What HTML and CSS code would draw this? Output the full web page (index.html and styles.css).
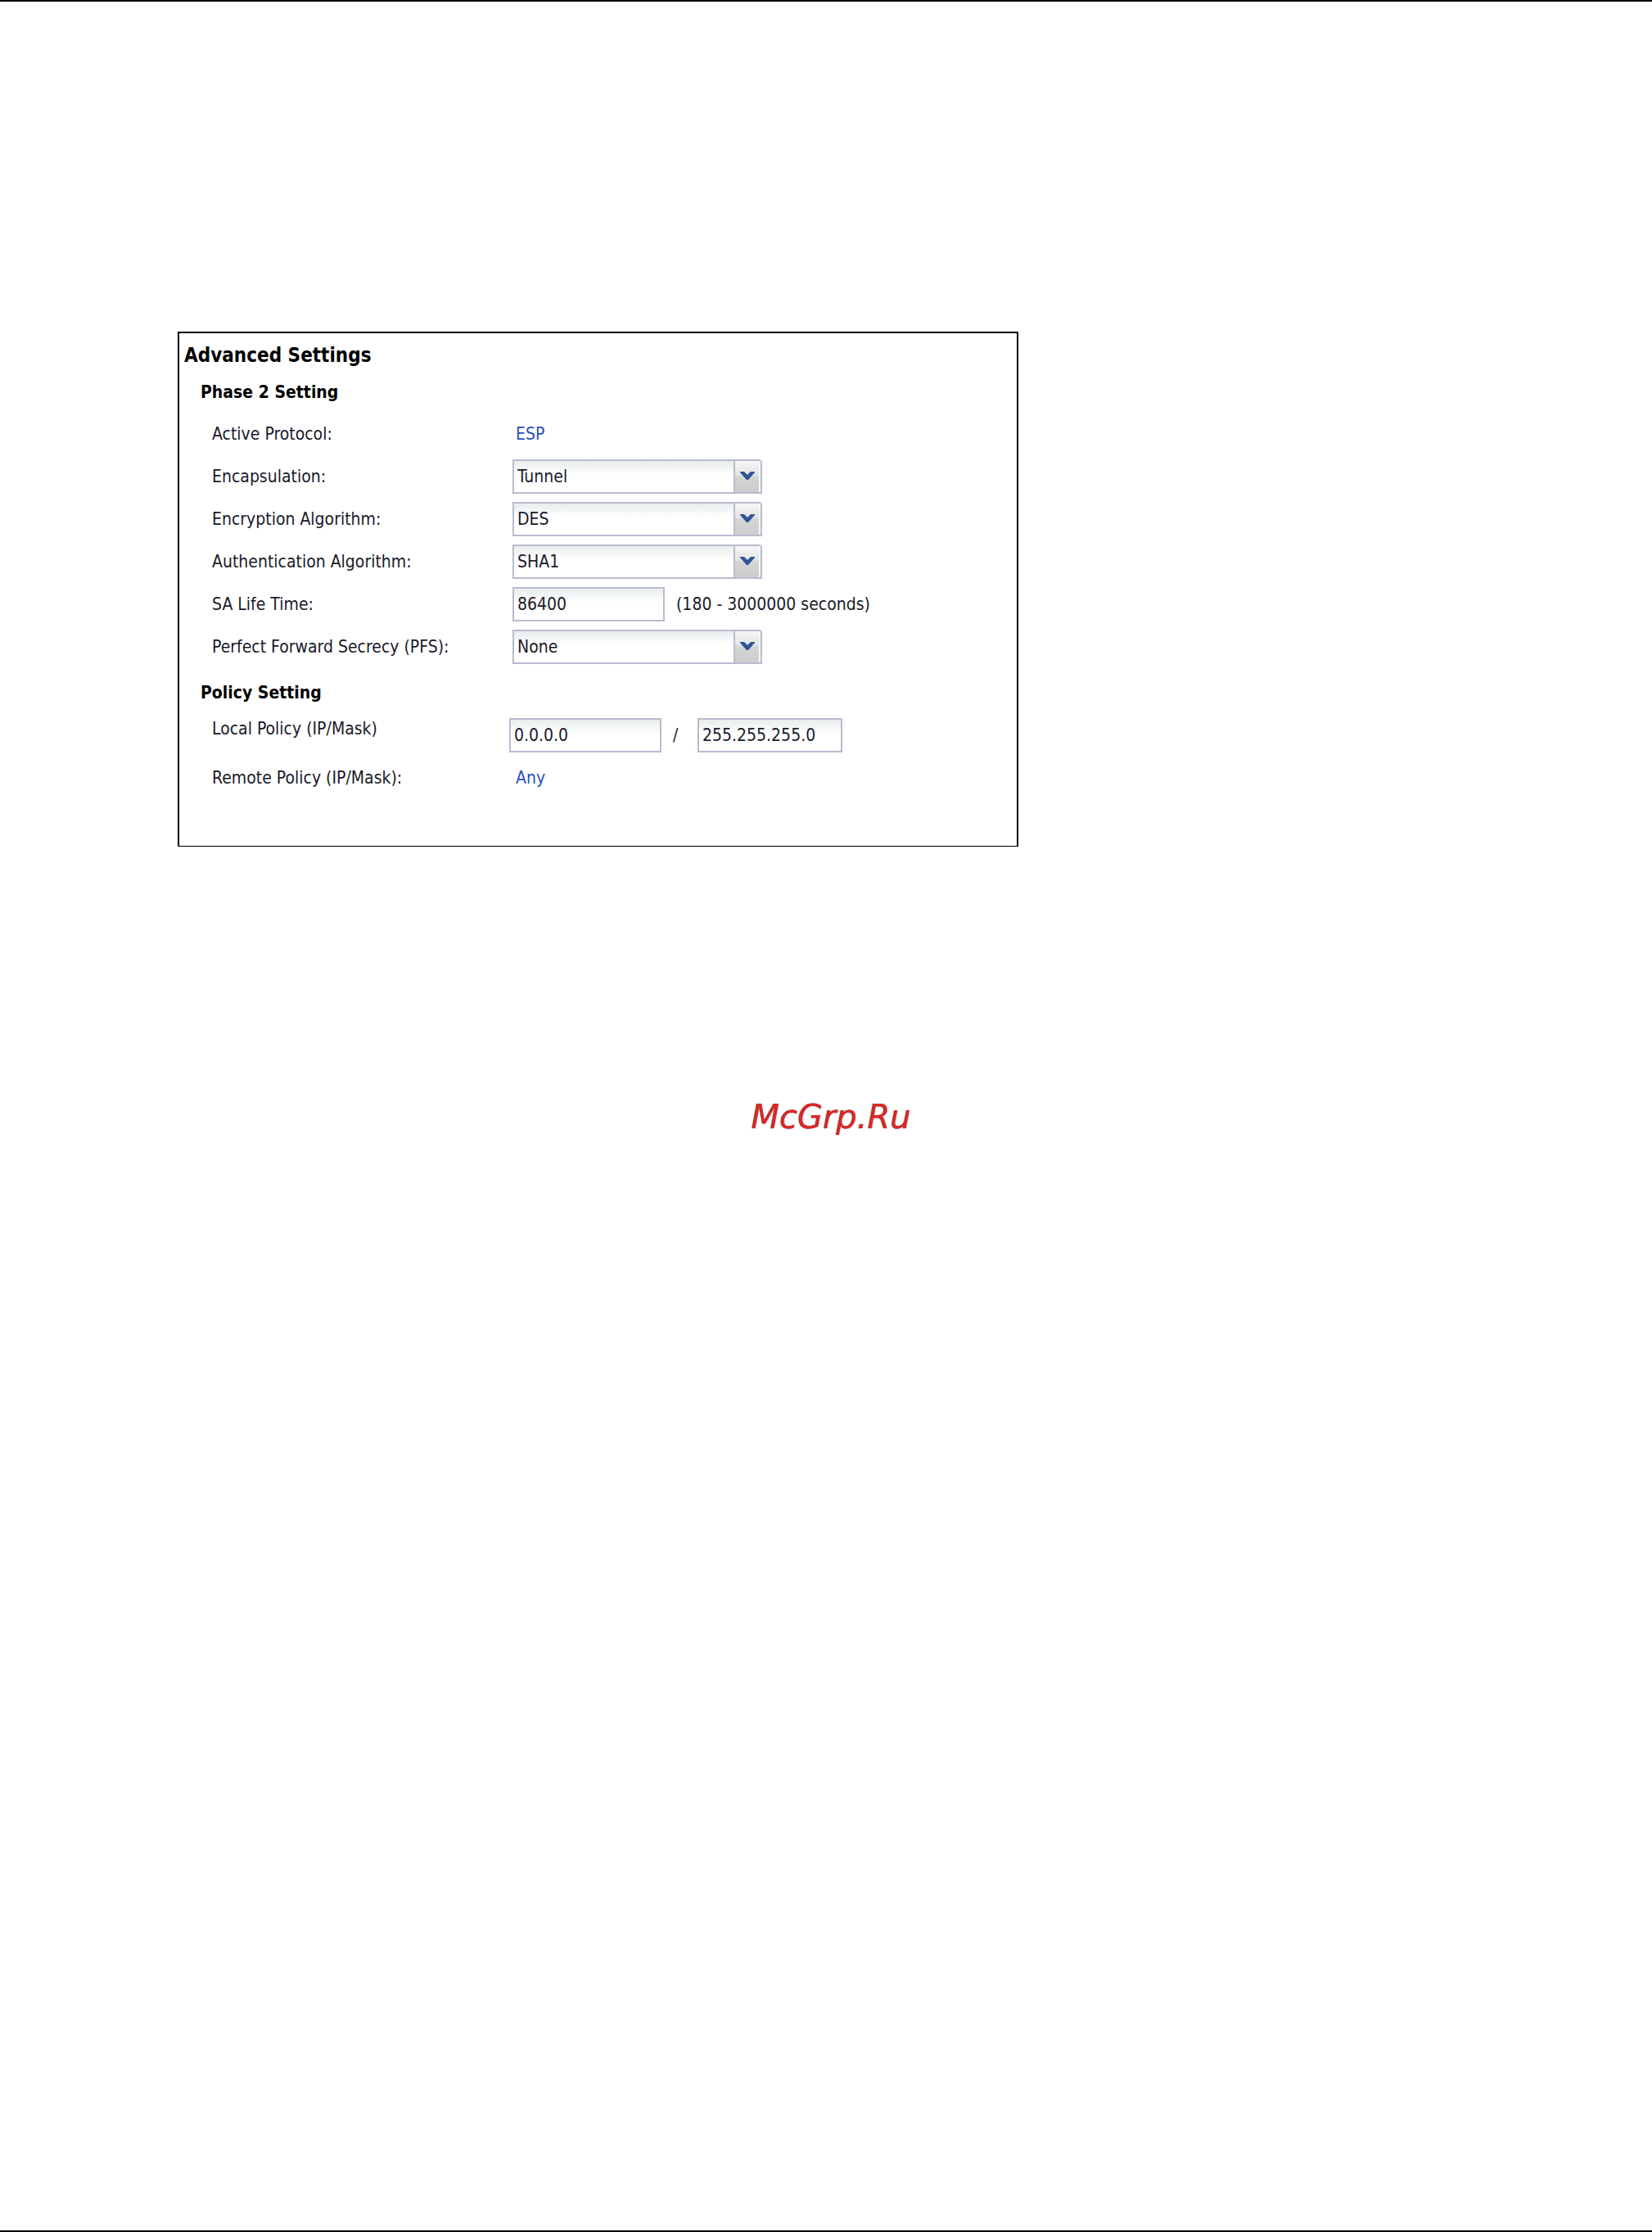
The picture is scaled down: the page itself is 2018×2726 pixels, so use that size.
FILE: index.html
```
<!DOCTYPE html>
<html lang="en">
<head>
    <meta charset="UTF-8">
    <meta name="viewport" content="width=device-width, initial-scale=1.0">
    <title>Advanced Settings</title>
    <link rel="stylesheet" href="styles.css">
</head>
<body>
    <main class="page">
        <form class="panel">
            <h1>Advanced Settings</h1>

            <section class="section phase">
                <h2>Phase 2 Setting</h2>
                <div class="row">
                    <span class="label">Active Protocol:</span>
                    <span class="value">ESP</span>
                </div>
                <div class="row">
                    <label class="label" for="encapsulation">Encapsulation:</label>
                    <div class="select">
                        <select id="encapsulation">
                            <option>Tunnel</option>
                        </select>
                        <span class="arrow"><svg viewBox="0 0 18 10"><path d="M0 0h5l4 4 4-4h5v1l-8 9H8L0 1z"/></svg></span>
                    </div>
                </div>
                <div class="row">
                    <label class="label" for="encryption">Encryption Algorithm:</label>
                    <div class="select">
                        <select id="encryption">
                            <option>DES</option>
                        </select>
                        <span class="arrow"><svg viewBox="0 0 18 10"><path d="M0 0h5l4 4 4-4h5v1l-8 9H8L0 1z"/></svg></span>
                    </div>
                </div>
                <div class="row">
                    <label class="label" for="authentication">Authentication Algorithm:</label>
                    <div class="select">
                        <select id="authentication">
                            <option>SHA1</option>
                        </select>
                        <span class="arrow"><svg viewBox="0 0 18 10"><path d="M0 0h5l4 4 4-4h5v1l-8 9H8L0 1z"/></svg></span>
                    </div>
                </div>
                <div class="row">
                    <label class="label" for="lifetime">SA Life Time:</label>
                    <div class="field">
                        <input type="text" id="lifetime" value="86400">
                        <span class="hint">(180 - 3000000 seconds)</span>
                    </div>
                </div>
                <div class="row">
                    <label class="label" for="pfs">Perfect Forward Secrecy (PFS):</label>
                    <div class="select">
                        <select id="pfs">
                            <option>None</option>
                        </select>
                        <span class="arrow"><svg viewBox="0 0 18 10"><path d="M0 0h5l4 4 4-4h5v1l-8 9H8L0 1z"/></svg></span>
                    </div>
                </div>
            </section>

            <section class="section policy">
                <h2>Policy Setting</h2>
                <div class="row">
                    <label class="label" for="localIp">Local Policy (IP/Mask)</label>
                    <div class="field">
                        <input type="text" id="localIp" value="0.0.0.0">
                        <span class="slash">/</span>
                        <input type="text" class="mask" aria-label="Local mask" value="255.255.255.0">
                    </div>
                </div>
                <div class="row">
                    <span class="label">Remote Policy (IP/Mask):</span>
                    <span class="value">Any</span>
                </div>
            </section>
        </form>

        <p class="site">McGrp.Ru</p>
    </main>
</body>
</html>
```
FILE: styles.css
```
* {
    box-sizing: border-box;
}
body {
    margin: 0;
    background: #fff;
    color: #1a1a2a;
    font-family: "DejaVu Sans Condensed", "DejaVu Sans", Tahoma, sans-serif;
    font-stretch: condensed;
    font-size: 21px;
    line-height: 28px;
}
.page {
    min-height: 100vh;
    padding-top: 403px;
    border-top: 2px solid #000;
    border-bottom: 2px solid #000;
}
.panel {
    max-width: 1027px;
    margin-left: 217px;
    padding: 12px 8px 53px 6px;
    border: 2px solid #000;
    border-bottom-width: 1px;
}
h1, h2 {
    margin: 0;
    color: #000;
    font-weight: bold;
}
h1 {
    font-size: 24px;
    line-height: 30px;
}
h2 {
    font-size: 21px;
    line-height: 28px;
}
.section {
    padding-left: 20px;
}
.phase {
    padding-top: 16px;
}
.phase h2 {
    margin-bottom: 16px;
}
.policy {
    padding-top: 21px;
}
.row {
    display: grid;
    grid-template-columns: 367px 1fr;
    align-items: center;
    height: 42px;
    margin: 0 0 10px 14px;
}
.phase .row:last-child {
    margin-bottom: 0;
}
.policy .row {
    grid-template-columns: 363px 1fr;
    height: 44px;
    margin: 16px 0 0 14px;
}
.policy .label {
    align-self: start;
}
.value {
    padding-left: 4px;
    color: #2a4fb8;
}
.policy .value {
    align-self: start;
    padding-left: 8px;
}
.field {
    display: flex;
    align-items: center;
}
input, select {
    width: 186px;
    height: 42px;
    padding: 0 4px;
    border: 2px solid #b9bccf;
    border-radius: 0;
    background: linear-gradient(#e9eded, #fff 45%);
    color: #1a1a2a;
    font: inherit;
}
.mask {
    width: 177px;
}
.hint {
    margin-left: 14px;
}
.slash {
    width: 44px;
    padding-left: 14px;
}
.select {
    position: relative;
    width: 305px;
}
select {
    display: block;
    width: 100%;
    appearance: none;
    border-top-right-radius: 4px;
}
.arrow {
    position: absolute;
    top: 2px;
    right: 2px;
    bottom: 2px;
    width: 33px;
    border-left: 2px solid #b9bccf;
    border-right: 2px solid #f6f6f8;
    background: linear-gradient(#f6f6f6, #e4e4e4 45%, #d4d4d4 50%, #cdcdcd);
    pointer-events: none;
}
.arrow svg {
    display: block;
    width: 18px;
    height: 10px;
    margin: 13px auto 0 6px;
    fill: #2f5496;
}
.site {
    margin: 300px 0 0;
    padding-left: 12px;
    color: #dd2626;
    font-family: "DejaVu Sans", Verdana, sans-serif;
    font-size: 40px;
    font-stretch: normal;
    font-style: italic;
    line-height: 60px;
    text-align: center;
    text-shadow: 0 0 1px #333;
}
```
